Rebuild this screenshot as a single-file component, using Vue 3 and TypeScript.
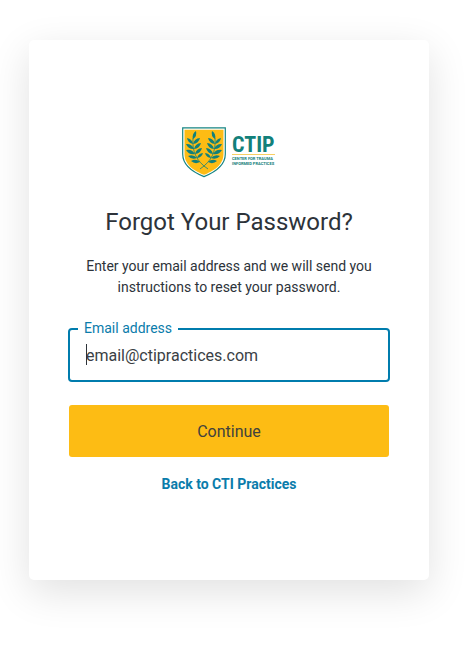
<script setup lang="ts">
import { onMounted, ref } from 'vue'

type Leaf = [baseX: number, baseY: number, tipX: number, tipY: number]

// One laurel branch; the other one is its mirror image.
const leaves: Leaf[] = [
  [11, 13, 14, 5],
  [11, 18, 5, 12],
  [11, 18, 18, 12],
  [12, 23, 4, 18],
  [12, 23, 19, 17],
  [13, 28, 4, 24],
  [13, 28, 20, 22],
  [15, 32, 6, 30],
  [15, 32, 21, 27],
  [18, 36, 9, 35],
]

function leafPath([bx, by, tx, ty]: Leaf): string {
  const mx = (bx + tx) / 2
  const my = (by + ty) / 2
  const dx = (tx - bx) * 0.36
  const dy = (ty - by) * 0.36
  return `M${bx} ${by}Q${mx - dy} ${my + dx} ${tx} ${ty}Q${mx + dy} ${my - dx} ${bx} ${by}Z`
}

const branch = leaves.map(leafPath).join('')
const email = ref('')
const field = ref<HTMLInputElement | null>(null)

onMounted(() => field.value?.focus())
</script>

<template>
  <main class="page">
    <section class="card">
      <svg class="logo" viewBox="0 0 94 52" role="img" aria-label="CTIP, Center for Trauma Informed Practices">
        <path d="M0.7 1.9H43.3V28C43.3 41 31 47 22 50.6C13 47 0.7 41 0.7 28Z" fill="#fff" stroke="#178582" stroke-width="1.2" />
        <path d="M2.5 3.7H41.5V28C41.5 39.5 30.5 45.4 22 48.8C13.5 45.4 2.5 39.5 2.5 28Z" fill="#fdbc14" />
        <g v-for="side in 2" :key="side" :transform="side === 2 ? 'translate(44 0) scale(-1 1)' : undefined">
          <path :d="branch" fill="#12807a" />
          <path d="M11 12C10 25 14 35 26 43" fill="none" stroke="#12807a" stroke-width="0.8" />
        </g>
        <text class="brand" x="50" y="26">CTIP</text>
        <path d="M50 28.5H93" stroke="#f8cf62" stroke-width="1" />
        <text class="tagline" x="50" y="34">CENTER FOR TRAUMA</text>
        <text class="tagline" x="50" y="39">INFORMED PRACTICES</text>
      </svg>

      <h1>Forgot Your Password?</h1>
      <p class="hint">Enter your email address and we will send you instructions to reset your password.</p>

      <form class="form" @submit.prevent>
        <div class="field">
          <label for="email">Email address</label>
          <input id="email" ref="field" v-model="email" type="email" placeholder="email@ctipractices.com" />
          <span v-if="!email" class="caret" aria-hidden="true"></span>
        </div>
        <button type="submit">Continue</button>
      </form>

      <a class="back" href="#">Back to CTI Practices</a>
    </section>
  </main>
</template>

<style>
body {
  margin: 0;
  background: #fff;
}
</style>

<style scoped>
.page {
  box-sizing: border-box;
  min-height: 100vh;
  padding: 40px 15px 40px 0;
  display: flex;
  justify-content: center;
  align-items: flex-start;
  overflow: hidden;
  font-family: Roboto, "Liberation Sans", sans-serif;
  color: #2d333a;
}

.card {
  box-sizing: border-box;
  width: 100%;
  max-width: 400px;
  min-height: 540px;
  padding: 41px 40px 40px;
  display: flex;
  flex-direction: column;
  align-items: center;
  justify-content: center;
  background: #fff;
  border-radius: 5px;
  box-shadow: 0 12px 40px rgba(0, 0, 0, 0.12);
}

.logo {
  width: 94px;
  height: 52px;
}

.brand,
.tagline {
  font-weight: 700;
  fill: #12807a;
}

.brand {
  font-family: "Liberation Sans Narrow", "Roboto Condensed", Roboto, sans-serif;
  font-size: 22px;
}

.tagline {
  font-size: 4px;
}

h1 {
  margin: 29px 0 19px;
  font-size: 24px;
  line-height: 30px;
  font-weight: 400;
  text-align: center;
}

.hint {
  margin: 0 0 30px;
  font-size: 14px;
  line-height: 21px;
  text-align: center;
}

.form {
  align-self: stretch;
  display: flex;
  flex-direction: column;
  gap: 23px;
}

.field {
  position: relative;
  margin: 0 -1px;
}

.field label {
  position: absolute;
  top: -9px;
  left: 10px;
  padding: 0 6px;
  background: #fff;
  color: #0a7cab;
  font-size: 14px;
  line-height: 18px;
}

.field input {
  box-sizing: border-box;
  display: block;
  width: 100%;
  height: 54px;
  padding: 0 16px;
  border: 2px solid #007cad;
  border-radius: 4px;
  outline: none;
  background: #fff;
  color: #2d333a;
  font-family: inherit;
  font-size: 16px;
}

.field input::placeholder {
  color: #3a3f45;
  opacity: 1;
}

.field input:placeholder-shown {
  caret-color: transparent;
}

.caret {
  display: none;
  position: absolute;
  top: 16px;
  left: 18px;
  width: 1px;
  height: 21px;
  background: #2d333a;
  pointer-events: none;
}

.field input:focus + .caret {
  display: block;
}

button {
  height: 52px;
  border: 0;
  border-radius: 3px;
  background: #fdbc14;
  color: #41423d;
  font-family: inherit;
  font-size: 16px;
  cursor: pointer;
}

.back {
  margin-top: 17px;
  color: #0a7cab;
  font-size: 14px;
  line-height: 21px;
  font-weight: 700;
  text-decoration: none;
}
</style>
